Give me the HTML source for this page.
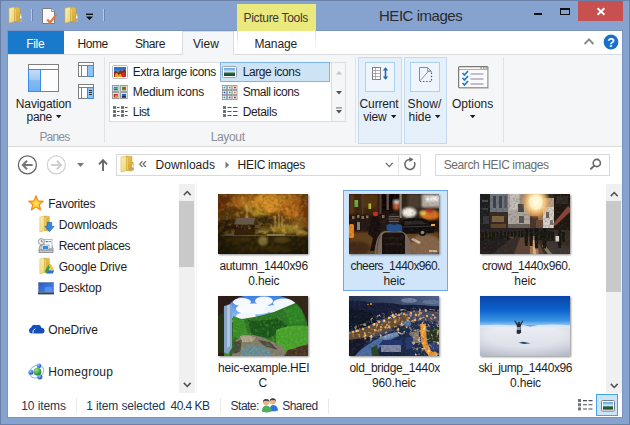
<!DOCTYPE html>
<html><head><meta charset="utf-8"><title>HEIC images</title>
<style>
*{box-sizing:border-box;margin:0;padding:0}
html,body{width:630px;height:425px;overflow:hidden}
body{background:#86a2cf;font-family:"Liberation Sans",sans-serif;font-size:12px;color:#1e1e1e;position:relative}
.a{position:absolute}
.t{position:absolute;white-space:pre}
svg{position:absolute;overflow:visible}
.th{position:absolute;width:90px;height:60px;box-shadow:1px 1px 2px rgba(0,0,0,.45);overflow:hidden}
.th svg{left:0;top:0}
.sep{position:absolute;width:1px;background:#e2e3e4}
</style></head><body>
<!-- window frame -->
<div class="a" style="left:0;top:0;width:630px;height:425px;border:1px solid #6a80a6"></div>
<div class="a" style="left:7px;top:30px;width:616px;height:388px;background:#7a95c3"></div>
<!-- title bar -->
<div class="a" style="left:237px;top:4px;width:79px;height:27px;background:#e9e97e"></div>
<div class="a" style="left:578px;top:1px;width:45px;height:20px;background:#c75050"></div>
<!-- tab row -->
<div class="a" style="left:8px;top:31px;width:614px;height:24px;background:#fff;border-bottom:1px solid #dadbdc"></div>
<div class="a" style="left:8px;top:31px;width:56px;height:23px;background:#1979ca"></div>
<div class="a" style="left:237px;top:31px;width:1px;height:20px;background:linear-gradient(#dcdcd2,#fff)"></div>
<div class="a" style="left:315px;top:31px;width:1px;height:20px;background:linear-gradient(#dcdcd2,#fff)"></div>
<!-- ribbon -->
<div class="a" style="left:8px;top:55px;width:614px;height:92px;background:#f5f6f7;border-bottom:1px solid #dadbdc"></div>
<div class="a" style="left:182px;top:31px;width:52px;height:24px;background:#f5f6f7;border:1px solid #dadbdc;border-bottom:none"></div>
<div class="sep" style="left:104px;top:57px;height:86px"></div>
<div class="sep" style="left:355px;top:57px;height:86px"></div>
<div class="sep" style="left:503px;top:57px;height:86px"></div>
<!-- gallery -->
<div class="a" style="left:109px;top:62px;width:237px;height:60px;background:#fff;border:1px solid #dcdddf"></div>
<div class="a" style="left:331px;top:62px;width:1px;height:60px;background:#dcdddf"></div>
<div class="a" style="left:332px;top:63px;width:13px;height:58px;background:#f5f6f7"></div>
<div class="a" style="left:220px;top:62px;width:110px;height:20px;background:#cde4f7;border:1px solid #7db6ea"></div>
<!-- current view / show hide buttons -->
<div class="a" style="left:358px;top:57px;width:44px;height:87px;background:#e6f0fa;border:1px solid #c2dbf3"></div>
<div class="a" style="left:365px;top:62px;width:30px;height:30px;background:#eef5fc;border:1px solid #a9d0f5"></div>
<div class="a" style="left:404px;top:57px;width:43px;height:87px;background:#e6f0fa;border:1px solid #c2dbf3"></div>
<div class="a" style="left:410px;top:62px;width:30px;height:30px;background:#eef5fc;border:1px solid #a9d0f5"></div>
<!-- address row -->
<div class="a" style="left:8px;top:147px;width:614px;height:35px;background:#fff"></div>
<div class="a" style="left:116px;top:154px;width:305px;height:22px;background:#fff;border:1px solid #d9d9d9"></div>
<div class="a" style="left:398px;top:155px;width:1px;height:20px;background:#e6e6e6"></div>
<div class="a" style="left:435px;top:154px;width:175px;height:22px;background:#fff;border:1px solid #d9d9d9"></div>
<!-- main -->
<div class="a" style="left:8px;top:182px;width:614px;height:211px;background:#fff"></div>
<div class="a" style="left:179px;top:184px;width:16px;height:209px;background:#f0f0f0"></div>
<div class="a" style="left:179px;top:201px;width:15px;height:66px;background:#c9c9c9"></div>
<div class="a" style="left:606px;top:184px;width:16px;height:209px;background:#f0f0f0"></div>
<div class="a" style="left:606px;top:201px;width:15px;height:91px;background:#c9c9c9"></div>
<div class="a" style="left:196px;top:183px;width:1px;height:210px;background:#f3f3f3"></div>
<!-- selection -->
<div class="a" style="left:343px;top:190px;width:105px;height:101px;background:#d0e5fa;border:1px solid #6ea8e8"></div>
<!-- status bar -->
<div class="a" style="left:8px;top:393px;width:614px;height:24px;background:#fff"></div>
<div class="a" style="left:76px;top:398px;width:1px;height:16px;background:#e9e9e9"></div>
<div class="a" style="left:220px;top:398px;width:1px;height:16px;background:#e9e9e9"></div>
<div class="a" style="left:328px;top:398px;width:1px;height:16px;background:#e9e9e9"></div>
<div class="a" style="left:596px;top:394px;width:22px;height:22px;background:#cce4f7;border:1px solid #45a2ec"></div>
<svg width="0" height="0" style="position:absolute"><defs>
<filter id="b1" x="-10%" y="-10%" width="120%" height="120%"><feGaussianBlur stdDeviation="0.6"/></filter>
<filter id="b2" x="-20%" y="-20%" width="140%" height="140%"><feGaussianBlur stdDeviation="1.3"/></filter>
<filter id="b3" x="-30%" y="-30%" width="160%" height="160%"><feGaussianBlur stdDeviation="4"/></filter>
<filter id="b05" x="-10%" y="-10%" width="120%" height="120%"><feGaussianBlur stdDeviation="0.45"/></filter>
<filter id="nz" x="0" y="0" width="100%" height="100%"><feTurbulence type="fractalNoise" baseFrequency="0.55" numOctaves="2" seed="3"/><feColorMatrix type="matrix" values="0 0 0 0 1  0 0 0 0 .75  0 0 0 0 .3  .9 .9 0 0 -.62"/></filter>
<filter id="nzd" x="0" y="0" width="100%" height="100%"><feTurbulence type="fractalNoise" baseFrequency="0.6" numOctaves="2" seed="8"/><feColorMatrix type="matrix" values="0 0 0 0 0  0 0 0 0 0  0 0 0 0 0  1.1 1.1 0 0 -.75"/></filter>
</defs></svg>

<!-- 1 autumn -->
<div class="th" style="left:218px;top:194px"><svg width="90" height="60" viewBox="0 0 90 60">
<defs>
<linearGradient id="au0" x1="0" y1="0" x2="0" y2="1"><stop offset="0" stop-color="#8a5216"/><stop offset=".3" stop-color="#7a4812"/><stop offset=".55" stop-color="#4a3210"/><stop offset=".69" stop-color="#33280a"/><stop offset="1" stop-color="#261e08"/></linearGradient>
<radialGradient id="auv" cx=".55" cy=".4" r=".8"><stop offset=".4" stop-color="#000" stop-opacity="0"/><stop offset="1" stop-color="#000" stop-opacity=".5"/></radialGradient>
<filter id="anz" x="0" y="0" width="100%" height="100%"><feTurbulence type="fractalNoise" baseFrequency="0.22" numOctaves="3" seed="5"/><feColorMatrix type="matrix" values="0 0 0 0 .92  0 0 0 0 .55  0 0 0 0 .12  1.8 1.3 0 0 -1.45"/></filter>
<filter id="anzd" x="0" y="0" width="100%" height="100%"><feTurbulence type="fractalNoise" baseFrequency="0.25" numOctaves="3" seed="11"/><feColorMatrix type="matrix" values="0 0 0 0 .12  0 0 0 0 .06  0 0 0 0 0  1.8 1.4 0 0 -1.45"/></filter>
</defs>
<rect width="90" height="60" fill="url(#au0)"/>
<g filter="url(#b2)">
 <ellipse cx="6" cy="8" rx="10" ry="9" fill="#80380e"/>
 <ellipse cx="24" cy="6" rx="11" ry="7" fill="#b86c1a"/>
 <ellipse cx="50" cy="9" rx="16" ry="10" fill="#d08a26"/>
 <ellipse cx="42" cy="19" rx="8" ry="4" fill="#a88428"/>
 <ellipse cx="74" cy="12" rx="11" ry="12" fill="#b8681a"/>
 <ellipse cx="87" cy="16" rx="6" ry="12" fill="#803e10"/>
 <ellipse cx="66" cy="4" rx="9" ry="4" fill="#c07c22"/>
 <ellipse cx="18" cy="19" rx="16" ry="5" fill="#5a3810"/>
 <ellipse cx="30" cy="14" rx="4" ry="4" fill="#a8862c"/>
 <ellipse cx="9" cy="32" rx="11" ry="8" fill="#2e1c08"/>
 <ellipse cx="45" cy="27" rx="11" ry="6" fill="#30200a"/>
 <ellipse cx="26" cy="34" rx="14" ry="6" fill="#2c1c08"/>
 <ellipse cx="82" cy="30" rx="9" ry="5" fill="#8a5a1c"/>
 <ellipse cx="68" cy="35" rx="16" ry="5" fill="#94782a"/>
 <ellipse cx="84" cy="39" rx="6" ry="2.500" fill="#b08a3a"/>
 <ellipse cx="46" cy="36" rx="6" ry="3" fill="#6a5a22"/>
 <rect x="0" y="41.500" width="90" height="19" fill="#2a2008"/>
 <ellipse cx="45" cy="47" rx="4.500" ry="4.500" fill="#8a7a3c"/>
 <ellipse cx="64" cy="46" rx="8" ry="3" fill="#54441a"/>
 <ellipse cx="20" cy="46" rx="12" ry="3" fill="#3c2e0e"/>
 <ellipse cx="30" cy="55" rx="16" ry="3" fill="#3a2c0e"/>
 <ellipse cx="60" cy="55" rx="14" ry="3" fill="#40320e"/>
</g>
<rect width="90" height="42" filter="url(#anz)" opacity=".5"/>
<rect width="90" height="60" filter="url(#anzd)" opacity=".65"/>
<g filter="url(#b05)">
 <path d="M16 30.500 L18.500 24 L37.500 24 L35.500 30.500 Z" fill="#66584a"/>
 <path d="M17.500 31 V41 M22 31 V41 M29 31 V41 M35 31 V41" stroke="#2a1a0a" stroke-width="1.200"/>
 <rect x="17" y="35.500" width="18" height="5.500" fill="#34240e"/>
 <path d="M29 12 V24 M57 22 V33 M61 20 V34 M64 22 V32" stroke="#c0a468" stroke-width=".7"/>
 <path d="M4 41.500 H86" stroke="#6a5a2a" stroke-width="1" opacity=".8"/>
 <rect x="49" y="40" width="18" height="1.800" fill="#8a7a50"/>
 <rect x="7" y="39.500" width="9" height="2" fill="#66604e"/>
 <rect x="37" y="31" width="5" height="3" fill="#5a4a3a"/>
</g>
<rect width="90" height="60" fill="url(#auv)"/>
</svg></div>

<!-- 2 cheers -->
<div class="th" style="left:349px;top:194px"><svg width="90" height="60" viewBox="0 0 90 60">
<defs><filter id="cnz" x="0" y="0" width="100%" height="100%"><feTurbulence type="fractalNoise" baseFrequency="0.4" numOctaves="2" seed="4"/><feColorMatrix type="matrix" values="0 0 0 0 .1  0 0 0 0 .06  0 0 0 0 .04  1.5 1.2 0 0 -1.2"/></filter></defs>
<rect width="90" height="60" fill="#1c110a"/>
<g filter="url(#b2)">
 <rect x="0" y="0" width="30" height="22" fill="#3e2410"/>
 <rect x="12" y="0" width="16" height="14" fill="#52300f"/>
 <rect x="0" y="0" width="5" height="20" fill="#5a3412"/>
 <rect x="33" y="0" width="16" height="16" fill="#0c0604"/>
 <rect x="52" y="0" width="40" height="26" fill="#2e2018"/>
 <rect x="59" y="0" width="12" height="14" fill="#4c3c30"/>
 <rect x="73" y="0" width="18" height="13" fill="#b8b0a8"/>
 <rect x="77" y="2.5" width="13" height="4.5" fill="#f2f2f2"/>
 <ellipse cx="60" cy="18.5" rx="7" ry="4.5" fill="#f6f0e6"/>
 <ellipse cx="81" cy="21" rx="9" ry="5" fill="#d8741e"/>
 <ellipse cx="80" cy="17" rx="4" ry="2" fill="#c0302a"/>
 <ellipse cx="74" cy="19" rx="3" ry="2" fill="#f0d060"/>
 <ellipse cx="47.5" cy="12" rx="3" ry="4" fill="#c8643a"/>
 <rect x="45" y="6.5" width="6" height="2.6" fill="#e8e0d8"/>
 <rect x="0" y="38" width="90" height="24" fill="#62401f"/>
 <ellipse cx="76" cy="52" rx="18" ry="11" fill="#86664a"/>
 <ellipse cx="58" cy="46" rx="8" ry="4" fill="#6a4c30"/>
 <ellipse cx="8" cy="54" rx="13" ry="7" fill="#422a14"/>
 <rect x="0" y="20" width="42" height="17" fill="#1e1410"/>
</g>
<g filter="url(#b1)">
 <rect x="5.5" y="6" width="3.6" height="7" fill="#6ab048"/>
 <rect x="19.5" y="9.5" width="2.6" height="5.5" fill="#b8c040"/>
 <rect x="13" y="0" width="1.5" height="20" fill="#4a3c30"/>
 <rect x="30.5" y="0" width="2" height="20" fill="#4a4038"/>
 <rect x="37.5" y="0" width="2.4" height="16" fill="#5a524a"/>
 <rect x="50.5" y="0" width="2.2" height="24" fill="#8a8278"/>
 <path d="M3 22 h2.5 v3 h-2.5z M8 21 h2.5 v3 h-2.5z M12.5 22 h2.5 v3 h-2.5z M17 21.5 h2.5 v3 h-2.5z M33 21 h2.5 v3 h-2.5z" fill="#8a6c58"/>
 <path d="M2.5 25 h4 v10 h-4z M7.5 24.5 h4 v12 h-4z M12 25 h4 v10 h-4z M16.500 24.5 h4 v10 h-4z M32 24 h5 v10 h-5z" fill="#241814"/>
 <rect x="8" y="28" width="3" height="8" fill="#8a8078"/>
 <rect x="0" y="30" width="5" height="14" rx="1.5" fill="#f08412"/>
 <path d="M51 32 Q52 25 60 24.5 L74 24.5 Q82 27 85 33 L85 39 L52 40 Z" fill="#0c0a0a"/>
 <path d="M56 27 L72 26.5 L78 30 L55 31 Z" fill="#2c2826"/>
 <path d="M52 33 L84 32" stroke="#4a4440" stroke-width=".8"/>
 <circle cx="73.5" cy="38.5" r="3.6" fill="#15110f"/><circle cx="73.5" cy="38.5" r="1.8" fill="#8a8480"/>
 <rect x="82" y="30" width="4" height="2" fill="#f0b040"/>
 <path d="M64 44 L72 48 L70 50 L62 45.5 Z" fill="#c8b8a0"/>
 <path d="M80 56 h8 v2 h-8z" fill="#c8b8a0"/>
 <path d="M23 24 Q27 20 30 24 L32 38 L28 46 L25 57 L21 57 L24 44 L19 40 Z" fill="#17100c"/>
 <ellipse cx="26.5" cy="20" rx="2.6" ry="2.2" fill="#d22a22"/>
 <path d="M26 60 Q26 40 36 37 L52 37 Q62 40 63 60 Z" fill="#7e6a5c"/>
 <path d="M28 60 Q28 48 31 42" stroke="#5a4a40" stroke-width="1.2" fill="none"/>
 <path d="M37.500 31 Q45 28 52.500 31 L53.500 36.500 Q45 39.500 37.500 36 Z" fill="#24508e"/>
 <ellipse cx="45" cy="25" rx="5.800" ry="6" fill="#2a2420"/>
 <path d="M39.800 22.500 H50.200 M39.500 25 H50.500 M39.800 27.500 H50.200" stroke="#8a7a68" stroke-width=".7"/>
 <path d="M33 43 Q33 38.500 38 38.500 L52 38.500 Q56 38.500 56 43 L56 60 L33 60 Z" fill="#15110e"/>
 <path d="M36 44 H53 M36 50 H53" stroke="#2e2824" stroke-width=".8"/>
</g>
<rect width="90" height="60" filter="url(#cnz)" opacity=".35"/>
</svg></div>

<!-- 3 crowd -->
<div class="th" style="left:480px;top:194px"><svg width="90" height="60" viewBox="0 0 90 60">
<defs><radialGradient id="sun" cx=".5" cy=".5" r=".5"><stop offset="0" stop-color="#fffdf0"/><stop offset=".4" stop-color="#fff0c0"/><stop offset=".7" stop-color="#f4b868" stop-opacity=".75"/><stop offset="1" stop-color="#e09040" stop-opacity="0"/></radialGradient>
<filter id="knz" x="0" y="0" width="100%" height="100%"><feTurbulence type="fractalNoise" baseFrequency="0.45" numOctaves="2" seed="9"/><feColorMatrix type="matrix" values="0 0 0 0 .08  0 0 0 0 .07  0 0 0 0 .07  1.5 1.2 0 0 -1.2"/></filter></defs>
<rect width="90" height="60" fill="#2c2826"/>
<g filter="url(#b1)">
 <rect x="0" y="0" width="10" height="40" fill="#1a1a1c"/>
 <rect x="2" y="6" width="6" height="2" fill="#4a4a4c"/><rect x="2" y="14" width="6" height="2" fill="#3a3a3c"/><rect x="3" y="22" width="6" height="8" fill="#34343a"/>
 <rect x="10" y="0" width="18" height="20" fill="#6e747c"/>
 <rect x="13" y="2" width="3" height="12" fill="#3a4048"/><rect x="19" y="2" width="3" height="12" fill="#3a4048"/><rect x="24.500" y="2" width="2" height="12" fill="#4a5058"/>
 <rect x="28" y="0" width="23" height="36" fill="#b0a8a0"/>
 <rect x="30" y="0" width="9" height="16" fill="#c6c0ba"/>
 <rect x="40" y="0" width="10" height="12" fill="#a09080"/>
 <rect x="38" y="10" width="6" height="8" fill="#4a4440"/><rect x="39" y="22" width="5" height="7" fill="#5a544e"/>
 <rect x="28" y="30" width="22" height="7" fill="#6a625c"/>
 <rect x="10" y="18" width="18" height="20" fill="#342a22"/>
 <rect x="12" y="22" width="12" height="6" fill="#806440"/>
 <rect x="11" y="30" width="15" height="5" fill="#5e4428"/>
 <rect x="50" y="12" width="14" height="26" fill="#a87848"/>
 <rect x="50" y="22" width="8" height="15" fill="#4a3628"/>
 <rect x="56" y="26" width="8" height="11" fill="#6a4c34"/>
 <rect x="63" y="12" width="12" height="25" fill="#d6d0ca"/>
 <rect x="64" y="4" width="10" height="9" fill="#b8a088"/>
 <rect x="66" y="18" width="3" height="6" fill="#6a645e"/><rect x="70" y="26" width="3" height="5" fill="#7a746e"/>
 <rect x="74" y="0" width="16" height="60" fill="#1a1310"/>
 <rect x="76" y="2" width="12" height="8" fill="#2e2620"/>
 <path d="M73 30 L88 12 L90 14 L90 18 L75 32 Z" fill="#8c4434"/>
</g>
<rect width="90" height="60" filter="url(#knz)" opacity=".45"/>
<ellipse cx="56" cy="8" rx="15" ry="17" fill="url(#sun)"/>
<g filter="url(#b1)">
 <rect x="0" y="36" width="90" height="24" fill="#342c28"/>
 <rect x="0" y="34" width="74" height="6" fill="#2a2420"/>
 <path d="M0 44 L22 41 L34 42 L12 60 L0 60 Z" fill="#241e1c"/>
 <path d="M40 44 L56 42 L64 60 L34 60 Z" fill="#5e4434"/>
 <path d="M50 42 L56 42 L59 60 L50 60 Z" fill="#a87c58"/>
 <path d="M53 46 L55 46 L56 60 L53 60 Z" fill="#e0b080"/>
 <path d="M66 46 L90 54 L90 60 L70 60 Z" fill="#3e3630"/>
 <path d="M64 50 L72 60 L68 60 L62 52 Z" fill="#8a7a5a"/>
 <ellipse cx="32" cy="43.5" rx="3" ry="1" fill="#6a3c38"/>
</g>
<g filter="url(#b05)" fill="#16120f">
 <path d="M1 38 h3 v9 h-3z M5 37 h2.500 v8 h-2.500z M9 38 h2 v7 h-2z M12 37.500 h3 v9 h-3z M16.500 38 h2 v7 h-2z M20 37 h2.500 v8 h-2.500z M24 38 h2 v6 h-2z M27 37 h2.500 v9 h-2.500z M31 37.500 h2 v5 h-2z M34 37 h2.500 v7 h-2.500z M38 37 h2 v6 h-2z M41 37 h2.500 v6 h-2.500z"/>
 <path d="M44.500 36.500 h3.600 v9 l-.6 6.500 h-2.400 l-.6 -6.500z M49.500 37 h3.400 v9 l-.5 6 h-2.400 l-.5 -6z M54.500 36.500 h4 v10 l-.7 8 h-2.600 l-.7 -8z M59.500 37 h3 v9 h-3z M62.500 36.500 h4.200 v10 l-.8 8 h-2.600 l-.8 -8z M67.500 37 h3 v10 h-3z M71 38 h3 v9 h-3z M78 38 h3.400 v10 l-.5 6 h-2.400 l-.5 -6z M82 38 h3 v10 h-3z"/>
 <ellipse cx="46.300" cy="36" rx="1.600" ry="1.600"/><ellipse cx="51.200" cy="36.500" rx="1.500" ry="1.500"/><ellipse cx="56.500" cy="36" rx="1.700" ry="1.700"/><ellipse cx="64.600" cy="36" rx="1.700" ry="1.700"/><ellipse cx="79.700" cy="37.500" rx="1.500" ry="1.500"/>
</g>
<rect x="75.500" y="42" width="3.600" height="5.500" fill="#d8d4d0" filter="url(#b05)"/>
<rect y="36" width="90" height="24" filter="url(#knz)" opacity=".4"/>
</svg></div>

<!-- 4 waterfall -->
<div class="th" style="left:218px;top:296px"><svg width="90" height="60" viewBox="0 0 90 60">
<defs><linearGradient id="wsky" x1="0" y1="0" x2="0" y2="1"><stop offset="0" stop-color="#3c7ee0"/><stop offset="1" stop-color="#9ccaf6"/></linearGradient>
<filter id="wnz" x="0" y="0" width="100%" height="100%"><feTurbulence type="fractalNoise" baseFrequency="0.4" numOctaves="2" seed="2"/><feColorMatrix type="matrix" values="0 0 0 0 .05  0 0 0 0 .18  0 0 0 0 .04  1.5 1.2 0 0 -1.2"/></filter>
<filter id="wnl" x="0" y="0" width="100%" height="100%"><feTurbulence type="fractalNoise" baseFrequency="0.35" numOctaves="2" seed="7"/><feColorMatrix type="matrix" values="0 0 0 0 .55  0 0 0 0 .8  0 0 0 0 .25  1.5 1.2 0 0 -1.3"/></filter>
<clipPath id="wcl"><path d="M14 23 Q22 25 30 23 Q44 21 56 17 Q70 11 80 7 L90 11 L90 60 L14 60 Z"/></clipPath>
</defs>
<rect width="90" height="60" fill="#2a6a20"/>
<rect x="10" y="0" width="72" height="26" fill="url(#wsky)"/>
<g filter="url(#b1)">
 <ellipse cx="24" cy="6" rx="9" ry="4" fill="#f4f8fc"/>
 <ellipse cx="46" cy="5" rx="9" ry="4.500" fill="#f4f8fc"/>
 <ellipse cx="66" cy="7" rx="11" ry="4.500" fill="#f2f6fc"/>
 <ellipse cx="36" cy="13" rx="18" ry="5.500" fill="#f8fbfe"/>
 <ellipse cx="58" cy="13" rx="12" ry="4" fill="#eef4fc"/>
 <ellipse cx="28" cy="20" rx="10" ry="3.500" fill="#f2f6fc"/>
 <path d="M14 22 Q22 24 30 22 Q44 20 56 16 Q70 10 80 6 L90 10 L90 44 L60 50 L30 44 L16 34 Z" fill="#2a7420"/>
 <path d="M30 24 Q46 26 60 22 L70 30 L52 42 L34 40 Z" fill="#185216"/>
 <path d="M58 34 Q70 28 90 30 L90 56 L66 60 L58 50 Z" fill="#48a42a"/>
 <path d="M66 14 Q76 8 84 12 L86 26 L72 28 Z" fill="#2a8424"/>
 <path d="M15 20 L26 24 L30 38 L22 44 L15 40 Z" fill="#3a8e28"/>
 <path d="M18 44 Q28 36 40 40 Q52 44 64 50 L70 60 L14 60 Z" fill="#8a7c70"/>
 <path d="M24 52 Q34 48 44 50 Q52 52 54 60 L22 60 Z" fill="#6c8c9c"/>
 <path d="M22 40 Q30 38 38 42 L34 46 L24 46 Z" fill="#b8a490"/>
 <path d="M40 44 L52 46 L60 54 L46 50 Z" fill="#4e4640"/>
 <path d="M16 46 L24 44 L22 56 L14 58 Z" fill="#4a443c"/>
 <path d="M70 54 L90 48 L90 60 L66 60 Z" fill="#4a2c22"/>
 <path d="M0 56 L12 54 L12 60 L0 60 Z" fill="#3a8a20"/>
</g>
<g clip-path="url(#wcl)"><rect x="14" y="0" width="76" height="60" filter="url(#wnz)" opacity=".55"/>
<rect x="14" y="0" width="76" height="60" filter="url(#wnl)" opacity=".3"/></g>
<g filter="url(#b1)">
 <path d="M0 0 H26 Q16 2 11 9 Q8 16 7 30 L6 60 H0 Z" fill="#2a1e16"/>
 <path d="M62 0 H90 V32 Q88 18 80 9 Q74 3 62 0 Z" fill="#34261c"/>
 <path d="M6 10 L14 8 L14 52 L10 58 L5 56 Z" fill="#86a2c4"/>
 <path d="M9 9 L12 8.500 L12 50 L9 52 Z" fill="#aec4de"/>
 <path d="M0 20 L6 16 L6 56 L0 58 Z" fill="#283018"/>
</g>
</svg></div>

<!-- 5 old bridge -->
<div class="th" style="left:349px;top:296px"><svg width="90" height="60" viewBox="0 0 90 60">
<defs><linearGradient id="bsky" x1="0" y1="0" x2="1" y2="0"><stop offset="0" stop-color="#26304c"/><stop offset=".5" stop-color="#3a4868"/><stop offset="1" stop-color="#55668a"/></linearGradient>
<filter id="bnz" x="0" y="0" width="100%" height="100%"><feTurbulence type="fractalNoise" baseFrequency="0.4" numOctaves="2" seed="6"/><feColorMatrix type="matrix" values="0 0 0 0 .04  0 0 0 0 .06  0 0 0 0 .14  1.5 1.2 0 0 -1.2"/></filter>
<filter id="bnl" x="0" y="0" width="100%" height="100%"><feTurbulence type="fractalNoise" baseFrequency="0.33" numOctaves="2" seed="13"/><feColorMatrix type="matrix" values="0 0 0 0 .98  0 0 0 0 .68  0 0 0 0 .3  2.4 1.6 0 0 -2.05"/></filter>
<clipPath id="bcl"><path d="M0 40 L0 30 L14 28 L26 20 L44 14 L70 12 L90 14 L90 60 L64 60 L62 40 L50 38 L34 42 L20 46 Z"/></clipPath>
</defs>
<rect width="90" height="60" fill="#1a2848"/>
<rect width="90" height="10" fill="url(#bsky)"/>
<g filter="url(#b1)">
 <ellipse cx="60" cy="4.500" rx="8" ry="2.500" fill="#7484a4"/>
 <ellipse cx="82" cy="6" rx="9" ry="2" fill="#6a7a9c"/>
 <path d="M0 5 Q14 4 24 7 Q40 6 54 9 Q72 8 90 11 L90 20 L0 24 Z" fill="#151d34"/>
 <path d="M0 12 L22 16 L28 26 L12 34 L0 34 Z" fill="#0d1322"/>
 <path d="M0 36 L14 32 L28 26 L44 19 L60 15 L74 14 L90 16 L90 30 L74 28 L60 28 L46 34 L30 40 L14 44 L0 46 Z" fill="#4a4a62"/>
 <path d="M0 38 L14 34 L30 28 L44 23 L58 19 L60 24 L46 30 L30 37 L14 42 L0 44 Z" fill="#70502e"/>
 <path d="M4 60 Q18 48 32 41 Q40 38 46 36 L50 40 Q40 44 30 52 Q26 56 24 60 Z" fill="#4e6ea4"/>
 <path d="M32 41 Q40 37 48 36 L50 40 Q42 41 36 45 Z" fill="#7090bc"/>
 <path d="M52 30 Q54 25 60 24 L63 29 Q58 30 55 33 Z" fill="#5878ac"/>
 <path d="M43 32 Q50 28 58 30 L58 33 Q50 31 44 35 Z" fill="#2a2c3c"/>
 <path d="M0 44 L22 41 L6 60 L0 60 Z" fill="#121826"/>
 <path d="M22 52 L28 49 L30 60 L23 60 Z" fill="#2c4424"/>
 <path d="M62 26 Q76 24 90 26 L90 60 L60 60 L64 42 Z" fill="#1c2a4e"/>
 <path d="M71 28 L77 27.500 L77.500 40 Q78 52 88 60 L80 60 Q72 52 71.500 40 Z" fill="#e8922e"/>
 <path d="M78 34 L90 31 L90 46 L80 46 Z" fill="#26361e"/>
 <rect x="32" y="49" width="20" height="7" fill="#8488a2"/>
 <path d="M30 49 L34 44 L52 44 L55 49 Z" fill="#22346a"/>
 <path d="M30 56 H56 V60 H30 Z" fill="#16223c"/>
 <path d="M62 36 L70 35 L70 47 L63 47 Z" fill="#8a7a70"/>
 <path d="M56 42 L64 40 L64 52 L57 54 Z" fill="#26386c"/>
 <path d="M80 47 L90 46 L90 54 L82 55 Z" fill="#2a3c70"/>
 <circle cx="86" cy="58" r="2.500" fill="#e8a040"/>
</g>
<rect width="90" height="60" filter="url(#bnz)" opacity=".5"/>
<g clip-path="url(#bcl)"><rect width="90" height="60" filter="url(#bnl)" opacity=".95"/></g>
<g filter="url(#b05)" fill="#f4ac44">
 <circle cx="4" cy="36" r="1.300"/><circle cx="9" cy="35" r="1.100"/><circle cx="14" cy="33" r="1.300"/><circle cx="20" cy="31" r="1.200"/><circle cx="25" cy="28.500" r="1.400"/><circle cx="30" cy="26" r="1.200"/><circle cx="35" cy="25" r="1.400"/><circle cx="40" cy="22" r="1.200"/><circle cx="45" cy="21" r="1.400"/><circle cx="50" cy="19" r="1.200"/><circle cx="55" cy="18" r="1.200"/><circle cx="62" cy="17" r="1.200"/><circle cx="67" cy="19" r="1.300"/><circle cx="72" cy="17" r="1"/><circle cx="78" cy="20" r="1.200"/><circle cx="84" cy="19" r="1"/><circle cx="66" cy="24" r="1.300"/><circle cx="74" cy="30" r="1.500"/><circle cx="74" cy="36" r="1.400"/><circle cx="32" cy="31" r="1.100"/><circle cx="26" cy="34" r="1.100"/><circle cx="38" cy="29" r="1"/><circle cx="16" cy="38" r="1"/><circle cx="22" cy="8" r=".9"/><circle cx="19" cy="8.500" r=".7"/><circle cx="46" cy="26" r="1.200"/><circle cx="60" cy="22" r="1.100"/>
</g>
<g filter="url(#b05)" fill="#ffe4a8"><circle cx="25.500" cy="28" r=".7"/><circle cx="41" cy="21.500" r=".7"/><circle cx="46" cy="20.500" r=".7"/><circle cx="35.500" cy="24.500" r=".7"/><circle cx="75" cy="33" r=".9"/><circle cx="47" cy="18" r=".8"/></g>
</svg></div>

<!-- 6 ski jump -->
<div class="th" style="left:480px;top:296px"><svg width="90" height="60" viewBox="0 0 90 60">
<defs>
<linearGradient id="ssky" x1="0" y1="0" x2="0" y2="1"><stop offset="0" stop-color="#0a44a8"/><stop offset=".45" stop-color="#0c62cc"/><stop offset=".8" stop-color="#3a94e4"/><stop offset=".93" stop-color="#8cc0ee"/><stop offset="1" stop-color="#d0e2f4"/></linearGradient>
<linearGradient id="sgr" x1="0" y1="0" x2="0" y2="1"><stop offset="0" stop-color="#e2e6ee"/><stop offset="1" stop-color="#ccd0da"/></linearGradient>
<radialGradient id="sgv" cx=".5" cy=".3" r=".8"><stop offset=".5" stop-color="#fff" stop-opacity=".25"/><stop offset="1" stop-color="#8088a0" stop-opacity=".3"/></radialGradient>
</defs>
<rect width="90" height="31" fill="url(#ssky)"/>
<rect y="31" width="90" height="29" fill="url(#sgr)"/>
<rect y="31" width="90" height="29" fill="url(#sgv)"/>
<g filter="url(#b05)">
 <path d="M0 29.5 Q20 28 34 29.6 L60 29 Q76 28 90 29.4 L90 31.4 L0 31.4 Z" fill="#dce8f6" opacity=".9"/>
 <path d="M44 29 L58 29.6 L50 30.4 Z" fill="#5a8ad0"/>
 <path d="M34.2 24.8 L36.4 28.6 L37 31 L36.6 37.6 L39.4 38 L41.2 36.6 L40.6 31 L41.4 28.6 L43.4 24.8 L42.4 24.6 L40.2 27.8 L37.6 27.8 L35.2 24.6 Z" fill="#2a2c34"/>
 <circle cx="38.9" cy="27" r="1.3" fill="#3a3030"/>
 <rect x="37" y="31" width="3.4" height="3" fill="#8a9cb4"/>
 <path d="M38.6 46.8 L43 45.8 L50.6 47.2 L44 48 Z" fill="#2c406c"/>
</g>
</svg></div>

<svg width="0" height="0" style="position:absolute">
<defs>
<linearGradient id="fgA" x1="0" y1="0" x2="1" y2="1"><stop offset="0" stop-color="#fbf3b8"/><stop offset="1" stop-color="#ecd36e"/></linearGradient>
<linearGradient id="fgB" x1="0" y1="0" x2="0" y2="1"><stop offset="0" stop-color="#e4be50"/><stop offset="1" stop-color="#d4a634"/></linearGradient>
<g id="folder">
  <path d="M1 1.2 L6.5 0 L6.5 14.6 L1 16 Z" fill="url(#fgA)" stroke="#d8b64e" stroke-width=".6"/>
  <path d="M6.5 0 L12 0.4 L12 15 L6.5 14.6 Z" fill="url(#fgB)" stroke="#c99b2e" stroke-width=".5"/>
  <path d="M7.2 1.6 L7.2 14" stroke="#f7e9a0" stroke-width=".7"/>
  <rect x="12" y="6.2" width="1.6" height="8.2" fill="#f0d67a" stroke="#c99b2e" stroke-width=".4"/>
  <rect x="12.3" y="9" width="1" height="3" fill="#fff"/>
  <rect x="12.3" y="11.6" width="1" height="1.6" fill="#3b8be0"/>
</g>
</defs></svg>
<!-- QAT -->
<svg style="left:8px;top:7px" width="16" height="16" viewBox="0 0 16 16"><use href="#folder"/></svg>
<div class="a" style="left:31px;top:9px;width:1px;height:12px;background:#b9c9e4"></div>
<div class="a" style="left:32px;top:9px;width:1px;height:12px;background:#6e86ad"></div>
<svg style="left:41px;top:7px" width="17" height="18" viewBox="0 0 17 18">
  <path d="M1.5 1.5 H10.5 L13.5 4.5 V16.5 H1.5 Z" fill="#fbfbfb" stroke="#7d7d7d" stroke-width="1"/>
  <path d="M10.5 1.5 V4.5 H13.5" fill="#e8e8e8" stroke="#7d7d7d" stroke-width=".8"/>
  <path d="M6.2 12.6 L9 15.6 L15.2 7.6" fill="none" stroke="#e8743b" stroke-width="2.2"/>
</svg>
<svg style="left:64px;top:7px" width="16" height="16" viewBox="0 0 16 16"><use href="#folder"/></svg>
<svg style="left:85px;top:13px" width="9" height="8" viewBox="0 0 9 8"><rect x="1" y="0.6" width="7" height="1.4" fill="#111"/><path d="M1 3.6 H8 L4.5 7 Z" fill="#111"/></svg>
<div class="a" style="left:103px;top:9px;width:1px;height:12px;background:#b9c9e4"></div>
<div class="a" style="left:104px;top:9px;width:1px;height:12px;background:#6e86ad"></div>
<!-- window buttons -->
<div class="a" style="left:534px;top:13px;width:8px;height:2px;background:#111"></div>
<div class="a" style="left:560px;top:8px;width:10px;height:7px;border:1px solid #111;border-top-width:2px"></div>
<svg style="left:596px;top:7px" width="10" height="9" viewBox="0 0 10 9"><path d="M1.6 1.2 L8.4 7.8 M8.4 1.2 L1.6 7.8" stroke="#fff" stroke-width="1.9" fill="none"/></svg>
<!-- ribbon collapse + help -->
<svg style="left:583px;top:37px" width="12" height="9" viewBox="0 0 12 9"><path d="M1.6 7 L6 2.4 L10.4 7" stroke="#8a8a8a" stroke-width="2" fill="none"/></svg>
<svg style="left:603px;top:34px" width="16" height="16" viewBox="0 0 16 16"><circle cx="8" cy="8" r="7.4" fill="#1a6fcb"/><text x="8" y="12.6" font-family="Liberation Sans, sans-serif" font-weight="bold" font-size="12.5" fill="#fff" text-anchor="middle">?</text></svg>
<!-- ribbon: nav pane icon -->
<svg style="left:28px;top:64px" width="31" height="28" viewBox="0 0 31 28">
 <defs><linearGradient id="npg" x1="0" y1="0" x2="0" y2="1"><stop offset="0" stop-color="#c4ddf8"/><stop offset=".45" stop-color="#a4cbf5"/><stop offset=".5" stop-color="#86bbf2"/><stop offset="1" stop-color="#6eaff0"/></linearGradient></defs>
 <rect x=".5" y=".5" width="30" height="27" fill="#fdfdfd" stroke="#7f7f7f"/>
 <path d="M.5 5.5 H30.5" stroke="#7f7f7f"/>
 <rect x=".5" y="5.5" width="12" height="22" fill="url(#npg)" stroke="#3a8bea"/>
</svg>
<svg style="left:78px;top:62px" width="16" height="15" viewBox="0 0 16 15">
 <rect x=".5" y=".5" width="15" height="14" fill="#fdfdfd" stroke="#7f7f7f"/>
 <path d="M.5 3.5 H15.5 M3.5 3.5 V14.5" stroke="#7f7f7f"/>
 <rect x="9.5" y="3.5" width="6" height="11" fill="#8fc1f4" stroke="#3a8bea"/>
</svg>
<svg style="left:78px;top:84px" width="16" height="15" viewBox="0 0 16 15">
 <rect x=".5" y=".5" width="15" height="14" fill="#fdfdfd" stroke="#7f7f7f"/>
 <path d="M.5 3.5 H15.5 M3.5 3.5 V14.5" stroke="#7f7f7f"/>
 <rect x="9.5" y="3.5" width="6" height="11" fill="#8fc1f4" stroke="#3a8bea"/>
 <path d="M11 6.5 H14 M11 8.5 H14 M11 10.5 H14" stroke="#333" stroke-width="1"/>
</svg>
<!-- nav pane dropdown arrows -->
<svg style="left:56px;top:115px" width="5.4" height="3.2" viewBox="0 0 7 4"><path d="M0 0 H7 L3.5 4 Z" fill="#1a1a1a"/></svg>
<svg style="left:390.5px;top:115px" width="5.4" height="3.2" viewBox="0 0 7 4"><path d="M0 0 H7 L3.5 4 Z" fill="#1a1a1a"/></svg>
<svg style="left:434.8px;top:115px" width="5.4" height="3.2" viewBox="0 0 7 4"><path d="M0 0 H7 L3.5 4 Z" fill="#1a1a1a"/></svg>
<svg style="left:470px;top:115px" width="5.4" height="3.2" viewBox="0 0 7 4"><path d="M0 0 H7 L3.5 4 Z" fill="#1a1a1a"/></svg>
<!-- gallery icons -->
<svg style="left:112px;top:65px" width="16" height="14" viewBox="0 0 16 14">
 <rect x=".5" y=".5" width="15" height="13" rx="1.2" fill="#fff" stroke="#b8bcc4"/>
 <rect x="2" y="2" width="12" height="10" fill="#3f8ee0"/>
 <rect x="2" y="2" width="12" height="3" fill="#2f72c8"/>
 <path d="M2 12 V7 L4 5.5 L6 8 L8 5 L10 6.5 L12 4.5 L14 6 V12 Z" fill="#8c2a12"/>
 <path d="M3 12 V9 L5 8 L6.5 10 L9 8.5 L10 12 Z" fill="#f0a020"/>
 <path d="M10 12 V8 L12 7 L14 9 V12 Z" fill="#d8261c"/>
</svg>
<svg style="left:112px;top:85px" width="16" height="14" viewBox="0 0 16 14">
 <g fill="#fff" stroke="#8a9099" stroke-width=".9"><rect x=".4" y=".4" width="6.6" height="6"/><rect x="8.6" y=".4" width="6.6" height="6"/><rect x=".4" y="7.6" width="6.6" height="6"/><rect x="8.6" y="7.6" width="6.6" height="6"/></g>
 <rect x="1.6" y="1.6" width="4.2" height="2" fill="#3a8ad8"/><rect x="1.6" y="3.6" width="4.2" height="1.8" fill="#2f7d3a"/>
 <rect x="9.8" y="1.6" width="4.2" height="3.8" fill="#3f9a2c"/><rect x="11.4" y="2.2" width="2" height="2" fill="#d83a20"/>
 <rect x="1.6" y="8.8" width="4.2" height="3.8" fill="#c8321a"/><rect x="3" y="10.4" width="2.4" height="2" fill="#f0a020"/>
 <rect x="9.8" y="8.8" width="4.2" height="3.8" fill="#2b62b8"/><rect x="9.8" y="11" width="4.2" height="1.6" fill="#1c2c50"/>
</svg>
<svg style="left:112.5px;top:106px" width="15" height="11" viewBox="0 0 15 11"><rect x="0.5" y="0.5" width="2" height="2" fill="#2d9a3a" stroke="#70757e" stroke-width="1"/><rect x="0.5" y="4.5" width="2" height="2" fill="#d8261c" stroke="#70757e" stroke-width="1"/><rect x="0.5" y="8.5" width="2" height="2" fill="#2b62d8" stroke="#70757e" stroke-width="1"/><rect x="8.5" y="0.5" width="2" height="2" fill="#2d9a3a" stroke="#70757e" stroke-width="1"/><rect x="8.5" y="4.5" width="2" height="2" fill="#d8261c" stroke="#70757e" stroke-width="1"/><rect x="8.5" y="8.5" width="2" height="2" fill="#2b62d8" stroke="#70757e" stroke-width="1"/><path d="M4 1.5 H6.6 M4 5.5 H6.6 M4 9.5 H6.6 M12 1.5 H14.6 M12 5.5 H14.6 M12 9.5 H14.6" stroke="#555" stroke-width="1"/></svg>
<svg style="left:222px;top:66px" width="15" height="12" viewBox="0 0 15 12">
 <defs><linearGradient id="lig" x1="0" y1="0" x2="0" y2="1"><stop offset="0" stop-color="#5aa0e0"/><stop offset=".5" stop-color="#d8ecf8"/><stop offset=".62" stop-color="#2f6a48"/><stop offset="1" stop-color="#17402c"/></linearGradient></defs>
 <rect x=".5" y=".5" width="14" height="11" rx="1" fill="#fff" stroke="#9aa3ae"/>
 <rect x="2" y="2" width="11" height="8" fill="url(#lig)"/>
</svg>
<svg style="left:222px;top:85px" width="16" height="15" viewBox="0 0 16 15">
 <g fill="#fff" stroke="#8a9099" stroke-width=".8">
 <rect x=".4" y=".4" width="4.2" height="4.2"/><rect x="5.6" y=".4" width="4.2" height="4.2"/><rect x="10.8" y=".4" width="4.2" height="4.2"/>
 <rect x=".4" y="5.4" width="4.2" height="4.2"/><rect x="5.6" y="5.4" width="4.2" height="4.2"/><rect x="10.8" y="5.4" width="4.2" height="4.2"/>
 <rect x=".4" y="10.4" width="4.2" height="4.2"/><rect x="5.6" y="10.4" width="4.2" height="4.2"/><rect x="10.8" y="10.4" width="4.2" height="4.2"/></g>
 <rect x="1.6" y="1.6" width="1.8" height="1.8" fill="#27a8c8"/><rect x="6.8" y="1.6" width="1.8" height="1.8" fill="#4aa82c"/><rect x="12" y="1.6" width="1.8" height="1.8" fill="#c8261c"/>
 <rect x="1.6" y="6.6" width="1.8" height="1.8" fill="#2b62b8"/><rect x="6.8" y="6.6" width="1.8" height="1.8" fill="#27a060"/><rect x="12" y="6.6" width="1.8" height="1.8" fill="#d88a20"/>
 <rect x="1.6" y="11.6" width="1.8" height="1.8" fill="#27a8a0"/><rect x="6.8" y="11.6" width="1.8" height="1.8" fill="#2b62b8"/><rect x="12" y="11.6" width="1.8" height="1.8" fill="#c8261c"/>
</svg>
<svg style="left:222.5px;top:106px" width="15" height="11" viewBox="0 0 15 11"><rect x="0.5" y="0.5" width="2" height="2" fill="#2d9a3a" stroke="#70757e" stroke-width="1"/><rect x="0.5" y="4.5" width="2" height="2" fill="#d8261c" stroke="#70757e" stroke-width="1"/><rect x="0.5" y="8.5" width="2" height="2" fill="#2b62d8" stroke="#70757e" stroke-width="1"/><path d="M4.5 1.5 H8.5 M10 1.5 H14.5 M4.5 5.5 H8.5 M10 5.5 H14.5 M4.5 9.5 H8.5 M10 9.5 H14.5" stroke="#555" stroke-width="1"/></svg>
<!-- gallery scroll arrows -->
<svg style="left:335.5px;top:70.5px" width="6" height="3.5" viewBox="0 0 7 4"><path d="M0 4 H7 L3.5 0 Z" fill="#c0c3c8"/></svg>
<svg style="left:335.5px;top:90.5px" width="6" height="3.5" viewBox="0 0 7 4"><path d="M0 0 H7 L3.5 4 Z" fill="#555"/></svg>
<svg style="left:335.5px;top:107px" width="6" height="7" viewBox="0 0 7 8"><rect x="0" y="0.5" width="7" height="1" fill="#555"/><path d="M0 3.5 H7 L3.5 7.5 Z" fill="#555"/></svg>
<!-- current view icon -->
<svg style="left:372px;top:67px" width="18" height="14" viewBox="0 0 18 14">
 <rect x=".5" y=".5" width="8" height="12" fill="#fff" stroke="#808080"/>
 <path d="M.5 3.5 H8.5 M.5 6.5 H8.5 M.5 9.5 H8.5 M3.5 .5 V12.5" stroke="#9a9a9a" stroke-width=".8"/>
 <path d="M13.5 1.5 V11.5" stroke="#1e6bb8" stroke-width="1.6"/>
 <path d="M10.8 3.6 L13.5 .2 L16.2 3.6 Z M10.8 9.4 L13.5 12.8 L16.2 9.4 Z" fill="#1e6bb8"/>
</svg>
<!-- show/hide icon -->
<svg style="left:419px;top:67px" width="13" height="15" viewBox="0 0 13 15">
 <path d="M.5 14 V.5 H8.5" fill="none" stroke="#8a8a8a"/>
 <path d="M8.5 .5 L12.5 4.5" stroke="#8a8a8a" fill="none"/>
 <path d="M8.5 .5 V4.5 H12.5" stroke="#8a8a8a" fill="none" stroke-width=".8"/>
 <path d="M12.5 5.5 V14.5 H1" fill="none" stroke="#1e6bb8" stroke-width="1.2" stroke-dasharray="1.6 1.6"/>
 <path d="M1 13.8 L10.5 3" stroke="#8a8a8a" stroke-width=".9"/>
</svg>
<!-- options icon -->
<svg style="left:458px;top:66px" width="31" height="23" viewBox="0 0 31 23">
 <rect x=".6" y=".6" width="29.4" height="21.2" rx="1" fill="#fafafa" stroke="#7a7a7a" stroke-width="1.2"/>
 <path d="M1 22.4 H30.4 V2" stroke="#c8c8c8" fill="none"/>
 <path d="M1 3.5 H30" stroke="#9a9a9a" stroke-width=".8"/>
 <path d="M22.5 2 h1.4 M25 2 h1.4 M27.5 2 h1.4" stroke="#555" stroke-width="1"/>
 <path d="M4.5 7 L6.5 9 L10 5 M4.5 12 L6.5 14 L10 10 M4.5 17 L6.5 19 L10 15" fill="none" stroke="#1e78d0" stroke-width="1.7"/>
 <path d="M12.5 8 H25.5 M12.5 13 H25.5 M12.5 18 H25.5" stroke="#8a7fa8" stroke-width="1"/>
</svg>
<!-- address bar nav buttons -->
<svg style="left:17px;top:155px" width="21" height="21" viewBox="0 0 21 21">
 <circle cx="10.4" cy="9.9" r="9" fill="#fff" stroke="#666" stroke-width="1.3"/>
 <path d="M15.6 10 H6.2 M10 5.8 L5.8 10 L10 14.2" fill="none" stroke="#777" stroke-width="2"/>
</svg>
<svg style="left:46px;top:155px" width="21" height="21" viewBox="0 0 21 21">
 <circle cx="10.3" cy="9.9" r="9" fill="#fff" stroke="#d2d2d2" stroke-width="1.2"/>
 <path d="M5.2 10 H14.6 M10.8 5.8 L15 10 L10.8 14.2" fill="none" stroke="#d0d0d0" stroke-width="2"/>
</svg>
<svg style="left:77px;top:163px" width="7" height="4" viewBox="0 0 7 4"><path d="M0 0 H7 L3.5 4 Z" fill="#777"/></svg>
<svg style="left:98px;top:159px" width="10" height="13" viewBox="0 0 10 13"><path d="M5 12 V1.6 M1 5.4 L5 1.2 L9 5.4" fill="none" stroke="#666" stroke-width="1.9"/></svg>
<svg style="left:119.5px;top:156px" width="14" height="16" viewBox="0 0 14 16"><use href="#folder"/></svg>
<svg style="left:225px;top:161px" width="5" height="8" viewBox="0 0 5 8"><path d="M.5 .5 L4.2 4 L.5 7.5 Z" fill="#777"/></svg>
<svg style="left:385px;top:161.5px" width="8.5" height="6" viewBox="0 0 10 7"><path d="M1 1 L5 5.4 L9 1" fill="none" stroke="#666" stroke-width="1.5"/></svg>
<svg style="left:403px;top:157px" width="14" height="14" viewBox="0 0 14 14"><path d="M11.4 5.2 A5 5 0 1 1 7 2.4" fill="none" stroke="#666" stroke-width="1.5"/><path d="M6.4 0 L10.6 2.4 L6.4 5 Z" fill="#666"/></svg>
<svg style="left:589px;top:158px" width="13" height="13" viewBox="0 0 13 13"><circle cx="7.8" cy="5" r="3.6" fill="none" stroke="#666" stroke-width="1.6"/><path d="M5.2 7.6 L1.4 11.4" stroke="#666" stroke-width="2"/></svg>
<!-- scrollbar arrows -->
<svg style="left:182.5px;top:189.5px" width="8.5" height="6" viewBox="0 0 10 7"><path d="M1 6 L5 1.8 L9 6" fill="none" stroke="#505050" stroke-width="1.8"/></svg>
<svg style="left:182.5px;top:382px" width="8.5" height="6" viewBox="0 0 10 7"><path d="M1 1 L5 5.2 L9 1" fill="none" stroke="#505050" stroke-width="1.8"/></svg>
<svg style="left:609.5px;top:190.5px" width="8.5" height="6" viewBox="0 0 10 7"><path d="M1 6 L5 1.8 L9 6" fill="none" stroke="#505050" stroke-width="1.8"/></svg>
<svg style="left:609.5px;top:382.5px" width="8.5" height="6" viewBox="0 0 10 7"><path d="M1 1 L5 5.2 L9 1" fill="none" stroke="#505050" stroke-width="1.8"/></svg>
<!-- nav pane icons -->
<svg style="left:28px;top:194.5px" width="16" height="16" viewBox="0 0 16 16">
 <defs><radialGradient id="stg" cx=".5" cy=".55" r=".5"><stop offset="0" stop-color="#ffe868"/><stop offset=".55" stop-color="#ffc428"/><stop offset="1" stop-color="#f89418"/></radialGradient></defs>
 <path d="M8 .8 L10.1 5.9 L15.4 6.2 L11.3 9.7 L12.7 15 L8 12.1 L3.3 15 L4.7 9.7 L.6 6.2 L5.9 5.9 Z" fill="url(#stg)" stroke="#ef8a1c" stroke-width="1.1" stroke-linejoin="round"/>
</svg>
<svg style="left:39px;top:216px" width="16" height="16" viewBox="0 0 16 16">
 <g transform="scale(.86 1)"><use href="#folder"/></g>
 <path d="M8.4 6.4 H12.6 V10.4 H15 L10.5 15.6 L6 10.4 H8.4 Z" fill="#2f8ae4" stroke="#1a64c0" stroke-width=".7"/>
</svg>
<svg style="left:38px;top:237.5px" width="16" height="16" viewBox="0 0 16 16">
 <path d="M1 10.5 L2.5 7 H13.5 L15 10.5 V14.5 H1 Z" fill="#c9ccd2" stroke="#7c8088" stroke-width=".8"/>
 <rect x="6" y="1.5" width="8" height="9" fill="#fbfbfb" stroke="#9a9ea6" stroke-width=".7"/>
 <rect x="7.5" y="3" width="3" height="1.2" fill="#3a8ad8"/><rect x="11.2" y="3" width="1.6" height="1.2" fill="#3a8ad8"/>
 <rect x="4" y="7" width="7" height="5" fill="#fff" stroke="#8a8e96" stroke-width=".7"/>
 <rect x="5" y="8" width="5" height="3" fill="#3a8ad8"/>
 <path d="M1 12 H15" stroke="#7c8088" stroke-width=".8"/>
 <circle cx="3.4" cy="3.6" r="3" fill="#f4f4f4" stroke="#8a8e96" stroke-width=".9"/>
 <path d="M3.4 1.8 V3.8 H5" stroke="#666" stroke-width=".8" fill="none"/>
</svg>
<svg style="left:39px;top:258px" width="16" height="16" viewBox="0 0 16 16">
 <g transform="scale(.86 1)"><use href="#folder"/></g>
 <path d="M9.6 6.8 L6 13 L7.6 15.4 L11 9.4 Z" fill="#2e9e4a"/>
 <path d="M9.6 6.8 H12.2 L15.2 12.4 H12.6 Z" fill="#f6c21c"/>
 <path d="M8.8 12.6 H15.2 L13.8 15.4 H7.4 Z" fill="#2a6fe0"/>
</svg>
<svg style="left:38px;top:282px" width="16" height="13" viewBox="0 0 16 13">
 <defs><linearGradient id="dsk" x1="0" y1="0" x2="1" y2="1"><stop offset="0" stop-color="#2458c0"/><stop offset="1" stop-color="#4c8cf0"/></linearGradient></defs>
 <rect x=".5" y=".5" width="15" height="10" fill="url(#dsk)" stroke="#7890b8" stroke-width="1"/>
 <rect x="7" y="5" width="7" height="5" fill="#5c98f4" opacity=".7"/>
 <rect x="0" y="10.6" width="16" height="1.8" fill="#39414f"/>
</svg>
<svg style="left:27.5px;top:323px" width="17" height="11" viewBox="0 0 17 11">
 <path d="M3.6 10.6 A3.2 3.2 0 0 1 3.2 4.4 A3.6 3.6 0 0 1 8.6 2.2 A3 3 0 0 1 13.2 4.8 A2.9 2.9 0 0 1 14 10.6 Z" fill="#1450b8"/>
 <path d="M2.2 9.4 Q1.4 5.4 5 4.2 L6 5.4 Q3.4 6.6 4.6 10 Z" fill="#fff" opacity=".0"/>
 <path d="M4.9 10.6 Q4.2 7 7.4 5.6" fill="none" stroke="#fff" stroke-width=".9"/>
</svg>
<svg style="left:27.5px;top:363px" width="17" height="17" viewBox="0 0 17 17">
 <defs>
 <radialGradient id="hgG" cx=".35" cy=".3" r=".7"><stop offset="0" stop-color="#9be08a"/><stop offset="1" stop-color="#1c8a2c"/></radialGradient>
 <radialGradient id="hgB" cx=".35" cy=".3" r=".7"><stop offset="0" stop-color="#9ec8ff"/><stop offset="1" stop-color="#1c4fc0"/></radialGradient>
 </defs>
 <ellipse cx="8.6" cy="8.6" rx="7.4" ry="6" fill="none" stroke="#9cc4f0" stroke-width="1.2" transform="rotate(-30 8.6 8.6)"/>
 <circle cx="11" cy="2.8" r="2.3" fill="url(#hgB)"/>
 <circle cx="2.9" cy="9.2" r="2.5" fill="url(#hgB)"/>
 <circle cx="11.8" cy="13.8" r="2.6" fill="url(#hgB)"/>
 <circle cx="9.4" cy="8.6" r="3.9" fill="url(#hgG)"/>
</svg>
<!-- status bar icons -->
<svg style="left:261px;top:397px" width="18" height="16" viewBox="0 0 18 16">
 <path d="M8.6 14 Q8.6 8.4 12 8 Q16.8 8.4 17 13.4 Q13 14.8 8.6 14 Z" fill="#2f74d8"/>
 <circle cx="11.8" cy="4.4" r="3" fill="#e8b48c"/>
 <path d="M8.7 4.4 A3.1 3.1 0 0 1 14.9 4.4 Q13.6 2.6 11.8 3.2 Q10 2.6 8.7 4.4 Z" fill="#3c3c3c"/>
 <path d="M.8 14.4 Q1 9 5 8.6 Q10.4 9 10.6 14.6 Q5.6 16.4 .8 14.4 Z" fill="#4fae62"/>
 <circle cx="5.2" cy="5.2" r="3.1" fill="#e8b48c"/>
 <path d="M2 5.2 A3.2 3.2 0 0 1 8.4 5.2 Q7 3.4 5.2 4 Q3.4 3.4 2 5.2 Z" fill="#3c3c3c"/>
</svg>
<svg style="left:577.5px;top:398.5px" width="15" height="12" viewBox="0 0 15 12"><rect x="0.5" y="0.5" width="2" height="2" fill="#2d7a3a" stroke="#70757e" stroke-width="1"/><rect x="0.5" y="4.7" width="2" height="2" fill="#d8261c" stroke="#70757e" stroke-width="1"/><rect x="0.5" y="8.9" width="2" height="2" fill="#2b62d8" stroke="#70757e" stroke-width="1"/><path d="M5 1.6 H9 M10.5 1.6 H14.5 M5 5.8 H9 M10.5 5.8 H14.5 M5 10 H9 M10.5 10 H14.5" stroke="#4a4f58" stroke-width="1.1"/></svg>
<svg style="left:601px;top:400px" width="14" height="12" viewBox="0 0 14 12">
 <rect x=".5" y=".5" width="13" height="10.6" rx="1" fill="#fff" stroke="#7a8088"/>
 <rect x="2" y="2" width="10" height="7.6" fill="url(#lig)"/>
</svg>

<div class="t" style="left:243.5px;top:11.0px;font-size:12px;line-height:14px;color:#3a3a3a;letter-spacing:-0.31px;">Picture Tools</div>
<div class="t" style="left:379.0px;top:7.0px;font-size:15px;line-height:17px;color:#2b2b2b;letter-spacing:-0.47px;">HEIC images</div>
<div class="t" style="left:26.2px;top:37.0px;font-size:12px;line-height:14px;color:#ffffff;letter-spacing:-0.30px;">File</div>
<div class="t" style="left:77.6px;top:37.0px;font-size:12px;line-height:14px;color:#1e1e1e;letter-spacing:-0.51px;">Home</div>
<div class="t" style="left:135.0px;top:37.0px;font-size:12px;line-height:14px;color:#1e1e1e;letter-spacing:-0.41px;">Share</div>
<div class="t" style="left:193.0px;top:37.0px;font-size:12px;line-height:14px;color:#1e1e1e;letter-spacing:0.04px;">View</div>
<div class="t" style="left:254.5px;top:37.0px;font-size:12px;line-height:14px;color:#1e1e1e;letter-spacing:-0.15px;">Manage</div>
<div class="t" style="left:15.8px;top:97.0px;font-size:12px;line-height:14px;color:#1e1e1e;letter-spacing:-0.11px;">Navigation</div>
<div class="t" style="left:26.6px;top:110.0px;font-size:12px;line-height:14px;color:#1e1e1e;letter-spacing:-0.39px;">pane</div>
<div class="t" style="left:39.4px;top:130.0px;font-size:12px;line-height:14px;color:#8a8f99;letter-spacing:-0.79px;">Panes</div>
<div class="t" style="left:132.8px;top:65.0px;font-size:12px;line-height:14px;color:#1e1e1e;letter-spacing:-0.37px;">Extra large icons</div>
<div class="t" style="left:132.8px;top:85.0px;font-size:12px;line-height:14px;color:#1e1e1e;letter-spacing:-0.24px;">Medium icons</div>
<div class="t" style="left:132.8px;top:105.0px;font-size:12px;line-height:14px;color:#1e1e1e;letter-spacing:-0.51px;">List</div>
<div class="t" style="left:242.7px;top:65.0px;font-size:12px;line-height:14px;color:#1e1e1e;letter-spacing:-0.41px;">Large icons</div>
<div class="t" style="left:242.7px;top:85.0px;font-size:12px;line-height:14px;color:#1e1e1e;letter-spacing:-0.46px;">Small icons</div>
<div class="t" style="left:242.7px;top:105.0px;font-size:12px;line-height:14px;color:#1e1e1e;letter-spacing:-0.36px;">Details</div>
<div class="t" style="left:210.7px;top:130.0px;font-size:12px;line-height:14px;color:#8a8f99;letter-spacing:-0.35px;">Layout</div>
<div class="t" style="left:359.6px;top:97.0px;font-size:12px;line-height:14px;color:#1e1e1e;letter-spacing:-0.15px;">Current</div>
<div class="t" style="left:363.3px;top:110.0px;font-size:12px;line-height:14px;color:#1e1e1e;letter-spacing:-0.19px;">view</div>
<div class="t" style="left:407.6px;top:97.0px;font-size:12px;line-height:14px;color:#1e1e1e;letter-spacing:0.08px;">Show/</div>
<div class="t" style="left:408.4px;top:110.0px;font-size:12px;line-height:14px;color:#1e1e1e;letter-spacing:0.07px;">hide</div>
<div class="t" style="left:451.9px;top:97.0px;font-size:12px;line-height:14px;color:#1e1e1e;letter-spacing:0.01px;">Options</div>
<div class="t" style="left:138.4px;top:154.0px;font-size:15px;line-height:17px;color:#555;letter-spacing:1.86px;">«</div>
<div class="t" style="left:155.6px;top:158.0px;font-size:12px;line-height:14px;color:#1e1e1e;letter-spacing:-0.01px;">Downloads</div>
<div class="t" style="left:237.6px;top:158.0px;font-size:12px;line-height:14px;color:#1e1e1e;letter-spacing:-0.31px;">HEIC images</div>
<div class="t" style="left:443.7px;top:158.0px;font-size:12px;line-height:14px;color:#6d6d6d;letter-spacing:-0.39px;">Search HEIC images</div>
<div class="t" style="left:48.2px;top:197.0px;font-size:12px;line-height:14px;color:#1e1e1e;letter-spacing:-0.27px;">Favorites</div>
<div class="t" style="left:58.7px;top:218.0px;font-size:12px;line-height:14px;color:#1e1e1e;letter-spacing:-0.07px;">Downloads</div>
<div class="t" style="left:58.7px;top:239.0px;font-size:12px;line-height:14px;color:#1e1e1e;letter-spacing:-0.35px;">Recent places</div>
<div class="t" style="left:58.7px;top:260.0px;font-size:12px;line-height:14px;color:#1e1e1e;letter-spacing:-0.15px;">Google Drive</div>
<div class="t" style="left:58.7px;top:281.0px;font-size:12px;line-height:14px;color:#1e1e1e;letter-spacing:-0.17px;">Desktop</div>
<div class="t" style="left:48.2px;top:323.0px;font-size:12px;line-height:14px;color:#1e1e1e;letter-spacing:-0.14px;">OneDrive</div>
<div class="t" style="left:48.2px;top:365.0px;font-size:12px;line-height:14px;color:#1e1e1e;letter-spacing:0.26px;">Homegroup</div>
<div class="t" style="left:21.2px;top:399.0px;font-size:12px;line-height:14px;color:#26344f;letter-spacing:-0.07px;">10 items</div>
<div class="t" style="left:86.3px;top:399.0px;font-size:12px;line-height:14px;color:#26344f;letter-spacing:-0.13px;">1 item selected</div>
<div class="t" style="left:170.6px;top:399.0px;font-size:12px;line-height:14px;color:#26344f;letter-spacing:-0.56px;">40.4 KB</div>
<div class="t" style="left:230.6px;top:399.0px;font-size:12px;line-height:14px;color:#26344f;letter-spacing:-0.52px;">State:</div>
<div class="t" style="left:282.3px;top:399.0px;font-size:12px;line-height:14px;color:#26344f;letter-spacing:-0.57px;">Shared</div>
<div class="t" style="left:219.4px;top:259.0px;font-size:12px;line-height:14px;color:#1e1e1e;letter-spacing:-0.31px;">autumn_1440x96</div>
<div class="t" style="left:248.3px;top:274.0px;font-size:12px;line-height:14px;color:#1e1e1e;letter-spacing:-0.16px;">0.heic</div>
<div class="t" style="left:350.6px;top:259.0px;font-size:12px;line-height:14px;color:#1e1e1e;letter-spacing:-0.60px;">cheers_1440x960.</div>
<div class="t" style="left:383.5px;top:274.0px;font-size:12px;line-height:14px;color:#1e1e1e;letter-spacing:-0.21px;">heic</div>
<div class="t" style="left:481.9px;top:259.0px;font-size:12px;line-height:14px;color:#1e1e1e;letter-spacing:-0.42px;">crowd_1440x960.</div>
<div class="t" style="left:514.3px;top:274.0px;font-size:12px;line-height:14px;color:#1e1e1e;letter-spacing:-0.09px;">heic</div>
<div class="t" style="left:218.0px;top:361.0px;font-size:12px;line-height:14px;color:#1e1e1e;letter-spacing:-0.20px;">heic-example.HEI</div>
<div class="t" style="left:258.5px;top:376.0px;font-size:12px;line-height:14px;color:#1e1e1e;letter-spacing:0.29px;">C</div>
<div class="t" style="left:349.5px;top:361.0px;font-size:12px;line-height:14px;color:#1e1e1e;letter-spacing:-0.31px;">old_bridge_1440x</div>
<div class="t" style="left:372.0px;top:376.0px;font-size:12px;line-height:14px;color:#1e1e1e;letter-spacing:-0.18px;">960.heic</div>
<div class="t" style="left:478.5px;top:361.0px;font-size:12px;line-height:14px;color:#1e1e1e;letter-spacing:-0.41px;">ski_jump_1440x96</div>
<div class="t" style="left:510.0px;top:376.0px;font-size:12px;line-height:14px;color:#1e1e1e;letter-spacing:-0.18px;">0.heic</div>
</body></html>
